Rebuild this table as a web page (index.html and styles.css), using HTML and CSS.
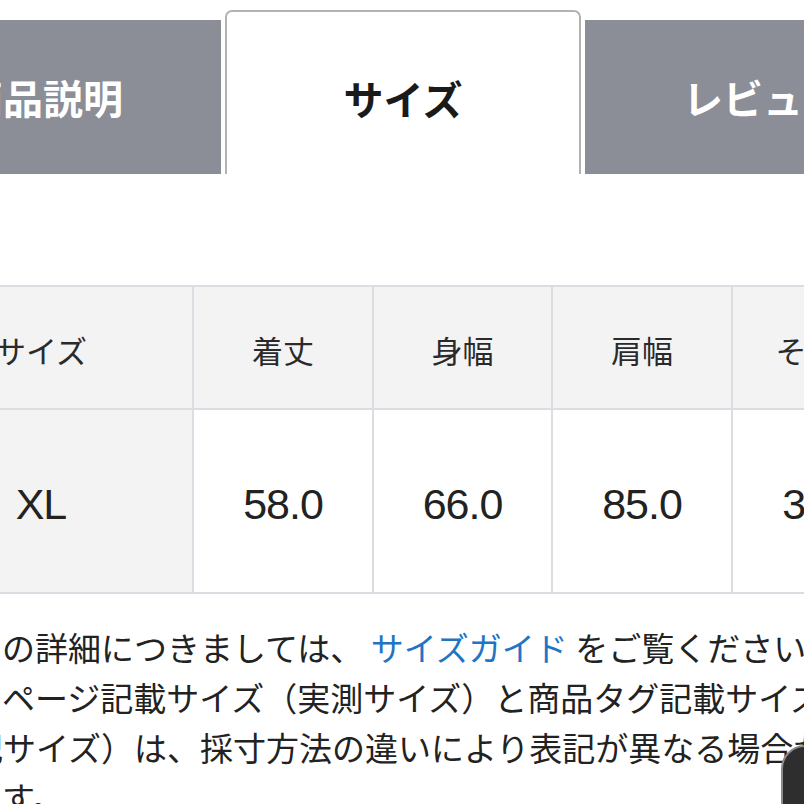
FILE: index.html
```html
<!DOCTYPE html>
<html lang="ja">
<head>
<meta charset="utf-8">
<link rel="stylesheet" href="styles.css">
</head>
<body>
<div class="page">
  <div class="tabs">
    <div class="tab">商品説明</div>
    <div class="tab active">サイズ</div>
    <div class="tab">レビュー</div>
  </div>

  <div class="size-table">
    <div class="cell head first">サイズ</div>
    <div class="cell head">着丈</div>
    <div class="cell head">身幅</div>
    <div class="cell head">肩幅</div>
    <div class="cell head">そで丈</div>
    <div class="cell label num">XL</div>
    <div class="cell num">58.0</div>
    <div class="cell num">66.0</div>
    <div class="cell num">85.0</div>
    <div class="cell num">30.0</div>
  </div>

  <div class="note">
    <div class="line">の詳細につきましては、 <a class="link">サイズガイド</a> をご覧ください。</div>
    <div class="line">ページ記載サイズ（実測サイズ）と商品タグ記載サイズ（表記</div>
    <div class="line shift">記サイズ）は、採寸方法の違いにより表記が異なる場合があります。</div>
    <div class="line">す。</div>
  </div>

  <div class="fab"></div>
</div>
</body>
</html>
```

FILE: styles.css
```css
html, body {
  margin: 0;
  padding: 0;
  background: #ffffff;
}

.page {
  position: relative;
  width: 804px;
  height: 804px;
  overflow: hidden;
  font-family: "Noto Sans CJK JP", "Noto Sans", sans-serif;
  color: #222;
}

.tabs {
  display: flex;
  align-items: flex-end;
  gap: 4px;
  margin-left: -135px;
  padding-top: 10px;
  width: max-content;
}

.tab {
  width: 356px;
  height: 154px;
  box-sizing: border-box;
  background: #8b8e96;
  color: #ffffff;
  font-weight: 700;
  font-size: 40px;
  display: flex;
  align-items: center;
  justify-content: center;
  flex-shrink: 0;
}

.tab.active {
  height: 164px;
  background: #ffffff;
  color: #1a1a1a;
  border: 2px solid #b3b3b3;
  border-bottom: none;
  border-radius: 7px 7px 0 0;
  padding-top: 10px;
}

.size-table {
  display: grid;
  grid-template-columns: 302px 178px 177px 178px 178px;
  grid-template-rows: 121px 182px;
  gap: 2px;
  padding: 2px;
  background: #dcdde2;
  margin-top: 111px;
  margin-left: -112px;
  width: max-content;
}

.cell {
  background: #ffffff;
  display: flex;
  align-items: center;
  justify-content: center;
  color: #222;
}

.cell.head {
  background: #f3f3f4;
  font-size: 31px;
  color: #2a2a2a;
  padding-top: 4px;
}

.cell.label {
  background: #f3f3f4;
}

.cell.num {
  font-family: "Liberation Sans", Arial, sans-serif;
  font-size: 43px;
  letter-spacing: -1px;
  padding-top: 6px;
}

.note {
  margin-top: 28px;
  font-size: 33px;
  line-height: 50px;
  color: #222;
  white-space: nowrap;
}

.line {
  padding-left: 2px;
}

.line.shift {
  margin-left: -32px;
}

.link {
  color: #1f74c4;
}

.fab {
  position: absolute;
  z-index: 2;
  left: 781px;
  top: 745px;
  width: 80px;
  height: 100px;
  border-radius: 24px;
  background: #2e2e2e;
  border: 2px solid #8a8a8a;
}
```
